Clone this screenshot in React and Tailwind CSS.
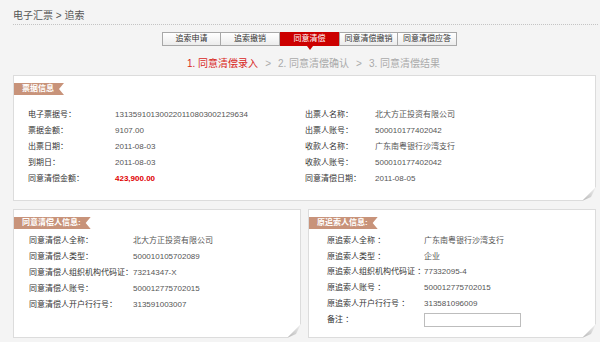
const font = "font-['Liberation_Sans','Noto_Sans_CJK_SC',sans-serif]";

const Ribbon = ({ children }) => (
  <div className="flex">
    <div className="h-[12px] pl-[8px] pr-[10px] bg-[#c8937a] text-white font-bold text-[8px] leading-[12px] whitespace-nowrap [clip-path:polygon(0_0,100%_0,calc(100%-5px)_50%,100%_100%,0_100%)]">
      {children}
    </div>
  </div>
);

const Fold = () => (
  <svg
    className="absolute right-[-1px] bottom-[-1px]"
    width="14"
    height="14"
    viewBox="0 0 14 14"
  >
    <defs>
      <linearGradient id="fg" x1="0" y1="1" x2="1" y2="0">
        <stop offset="0" stopColor="#b5b5b5" />
        <stop offset="1" stopColor="#f2f2f2" />
      </linearGradient>
    </defs>
    <polygon points="0,14 14,0 14,14" fill="#f4f4f4" />
    <polygon points="0,14 14,0 9,10" fill="url(#fg)" />
  </svg>
);

const Row = ({ label, value, lw, red }) => (
  <div className="flex h-[15.8px] items-center text-[8px] whitespace-nowrap">
    <span className={`${lw} text-[#333] shrink-0`}>{label}</span>
    <span className={red ? "text-[#e00000] font-bold" : "text-[#555]"}>{value}</span>
  </div>
);

export default function App() {
  const tabs = ["追索申请", "追索撤销", "同意清偿", "同意清偿撤销", "同意清偿应答"];
  return (
    <div className={`w-[600px] h-[342px] overflow-hidden bg-[#f4f4f4] pl-[13px] pr-[4px] ${font}`}>
      <div className="pt-[10px] pb-[2px] border-b border-dotted border-[#c4c4c4] mr-[-2px]">
        <div className="text-[10px] leading-[12px] text-[#555]">电子汇票 &gt; 追索</div>
      </div>

      <div className="flex pl-[149px] mt-[7px]">
        {tabs.map((t, i) =>
          i === 2 ? (
            <div
              key={t}
              className="relative w-[59px] h-[14px] bg-[#cc0000] text-white text-[8px] leading-[14px] text-center"
            >
              {t}
              <span className="absolute left-[27px] top-[14px] w-0 h-0 border-l-[3px] border-r-[3px] border-t-[4px] border-l-transparent border-r-transparent border-t-[#cc0000]" />
            </div>
          ) : (
            <div
              key={t}
              className={`w-[59px] h-[14px] bg-gradient-to-b from-white to-[#ececec] border border-[#a8a8a8] ${i === 1 || i === 4 ? "border-l-0" : ""} text-[#333] text-[8px] leading-[12px] text-center`}
            >
              {t}
            </div>
          )
        )}
      </div>

      <div className="flex items-center gap-[7px] pl-[174px] mt-[10px] h-[14px] text-[10px] text-[#aaa]">
        <span className="text-[#d8261c]">1. 同意清偿录入</span>
        <span>&gt;</span>
        <span>2. 同意清偿确认</span>
        <span>&gt;</span>
        <span>3. 同意清偿结果</span>
      </div>

      <div className="relative mt-[5px] h-[126px] bg-white border border-[#dcdcdc] pt-[7px]">
        <Ribbon>票据信息</Ribbon>
        <div className="flex pl-[14px] pt-[12.5px]">
          <div className="w-[277px]">
            <Row lw="w-[87px]" label="电子票据号：" value="131359101300220110803002129634" />
            <Row lw="w-[87px]" label="票据金额：" value="9107.00" />
            <Row lw="w-[87px]" label="出票日期：" value="2011-08-03" />
            <Row lw="w-[87px]" label="到期日：" value="2011-08-03" />
            <Row lw="w-[87px]" label="同意清偿金额：" value="423,900.00" red />
          </div>
          <div>
            <Row lw="w-[70px]" label="出票人名称：" value="北大方正投资有限公司" />
            <Row lw="w-[70px]" label="出票人账号：" value="500010177402042" />
            <Row lw="w-[70px]" label="收款人名称：" value="广东南粤银行沙湾支行" />
            <Row lw="w-[70px]" label="收款人账号：" value="500010177402042" />
            <Row lw="w-[70px]" label="同意清偿日期：" value="2011-08-05" />
          </div>
        </div>
        <Fold />
      </div>

      <div className="flex gap-[7px] mt-[8px]">
        <div className="relative w-[288px] h-[129px] bg-white border border-[#dcdcdc] pt-[7px]">
          <Ribbon>同意清偿人信息:</Ribbon>
          <div className="pl-[15px] pt-[4.5px]">
            <Row lw="w-[104px]" label="同意清偿人全称：" value="北大方正投资有限公司" />
            <Row lw="w-[104px]" label="同意清偿人类型：" value="500010105702089" />
            <Row lw="w-[104px]" label="同意清偿人组织机构代码证：" value="73214347-X" />
            <Row lw="w-[104px]" label="同意清偿人账号：" value="500012775702015" />
            <Row lw="w-[104px]" label="同意清偿人开户行行号：" value="313591003007" />
          </div>
          <Fold />
        </div>

        <div className="relative w-[288px] h-[129px] bg-white border border-[#dcdcdc] pt-[7px]">
          <Ribbon>原追索人信息:</Ribbon>
          <div className="pl-[18px] pt-[4px]">
            <Row lw="w-[97px]" label="原追索人全称 ：" value="广东南粤银行沙湾支行" />
            <Row lw="w-[97px]" label="原追索人类型 ：" value="企业" />
            <Row lw="w-[97px]" label="原追索人组织机构代码证 ：" value="77332095-4" />
            <Row lw="w-[97px]" label="原追索人账号 ：" value="500012775702015" />
            <Row lw="w-[97px]" label="原追索人开户行行号 ：" value="313581096009" />
            <div className="flex h-[15.8px] items-center text-[8px]">
              <span className="w-[97px] text-[#333] shrink-0">备注 ：</span>
              <input className="w-[97px] h-[14px] border border-[#bdbdbd] bg-white outline-none" />
            </div>
          </div>
          <Fold />
        </div>
      </div>
    </div>
  );
}
